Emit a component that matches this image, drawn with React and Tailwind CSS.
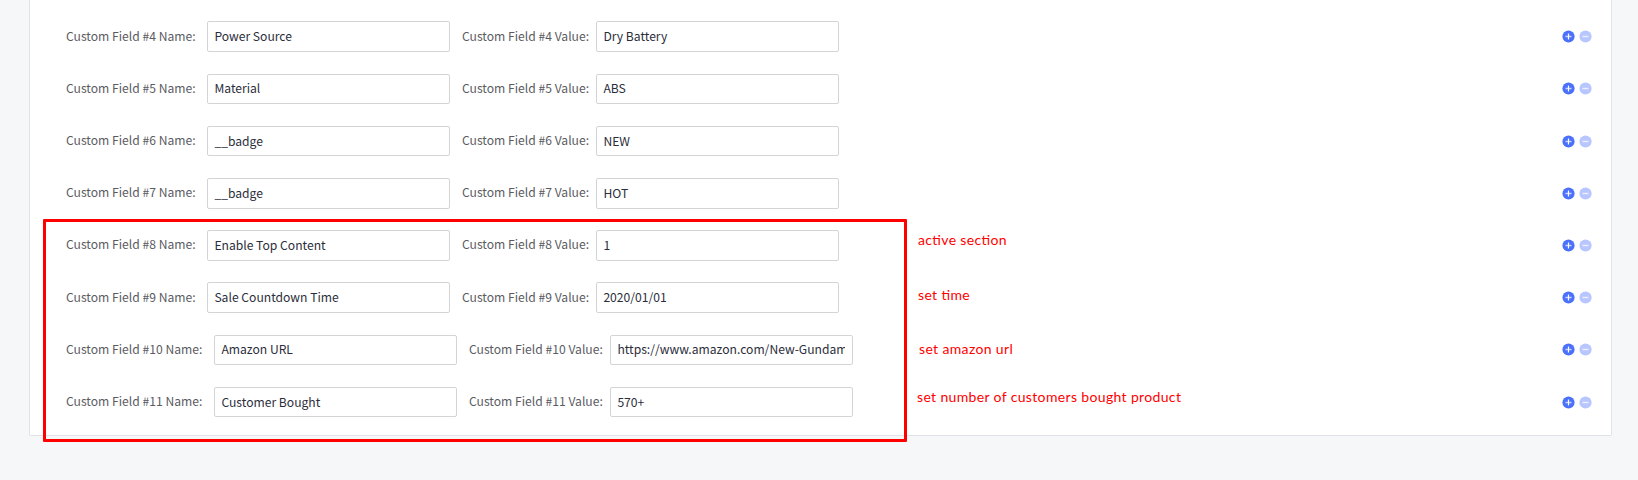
const rows = [
  ['4', 'Power Source', 'Dry Battery'],
  ['5', 'Material', 'ABS'],
  ['6', '__badge', 'NEW'],
  ['7', '__badge', 'HOT'],
  ['8', 'Enable Top Content', '1'],
  ['9', 'Sale Countdown Time', '2020/01/01'],
  ['10', 'Amazon URL', 'https://www.amazon.com/New-Gundam'],
  ['11', 'Customer Bought', '570+'],
];

function Field({ value }) {
  return (
    <div className="flex h-[30.6px] w-[243px] items-center rounded-[2px] border border-[#d4d4d6] bg-white pr-[7px] pb-[1px] pl-[6.4px]">
      <div className="w-full overflow-hidden whitespace-nowrap leading-5 text-[#2b2d3a]">{value}</div>
    </div>
  );
}

function RoundIcon({ color, plus }) {
  return (
    <svg className="block size-[13px]" viewBox="0 0 13 13">
      <circle cx="6.5" cy="6.5" r="6.1" fill={color} />
      <path d="M3.5 6.5h6" stroke="#fff" strokeWidth="1.5" strokeOpacity="0.7" />
      {plus && <path d="M6.5 3.5v6" stroke="#fff" strokeWidth="1.2" />}
    </svg>
  );
}

function Row({ row: [id, name, value] }) {
  const wide = id.length > 1;
  return (
    <div className="flex h-[30.6px] items-center whitespace-nowrap text-[12.14px] leading-5 text-[#5a5b62]">
      <div className={wide ? 'w-[148px] pb-[2.2px]' : 'w-[141px] pb-[2.2px]'}>Custom Field #{id} Name:</div>
      <Field value={name} />
      <div className={wide ? 'w-[153px] pb-[2.2px] pl-3' : 'w-[146px] pb-[2.2px] pl-3'}>Custom Field #{id} Value:</div>
      <Field value={value} />
      <div className="ml-auto flex gap-[4.5px]">
        <RoundIcon color="#4b71fc" plus />
        <RoundIcon color="#b7c6fe" />
      </div>
    </div>
  );
}

function Note({ className, children }) {
  return (
    <div
      className={`absolute whitespace-nowrap font-[Lato,sans-serif] text-[14px] leading-5 tracking-[0.35px] text-[#ff0000] [font-feature-settings:'liga'] ${className}`}
    >
      {children}
    </div>
  );
}

export default function App() {
  return (
    <div className="relative h-[480px] w-[1638px] overflow-hidden bg-[#f6f7f9] px-[29px] font-['Noto_Sans_CJK_SC',sans-serif]">
      <div className="flex h-[436px] w-[1583px] flex-col gap-[21.6px] rounded-b-[2px] border-x border-b border-[#e1e3e9] bg-white pt-[21.4px] pr-[19px] pl-9">
        {rows.map((row) => (
          <Row key={row[0]} row={row} />
        ))}
      </div>
      <div className="absolute top-[219px] left-[43px] h-[223px] w-[864px] rounded-[1px] border-[3px] border-[#ff0000]" />
      <Note className="top-[230px] left-[918px]">active section</Note>
      <Note className="top-[285px] left-[918px]">set time</Note>
      <Note className="top-[339px] left-[919px]">set amazon url</Note>
      <Note className="top-[387px] left-[917px]">set number of customers bought product</Note>
    </div>
  );
}
